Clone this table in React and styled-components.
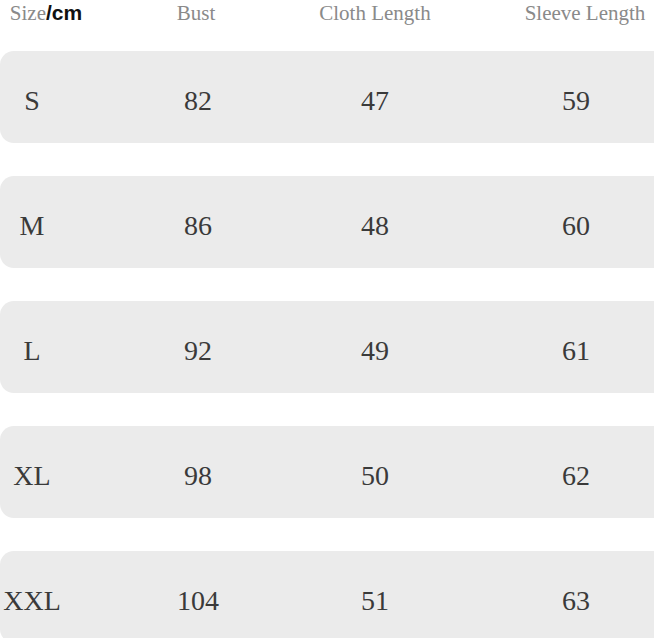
import React from 'react';
import styled, { createGlobalStyle } from 'styled-components';

const GlobalStyle = createGlobalStyle`
  html, body {
    margin: 0;
    padding: 0;
    background: #fff;
    overflow: hidden;
  }
`;

const Page = styled.div`
  width: 654px;
  height: 638px;
  overflow: hidden;
  display: flex;
  flex-direction: column;
  font-family: "Liberation Serif", "Times New Roman", serif;
`;

const Header = styled.div`
  display: grid;
  grid-template-columns: 92px 208px 150px 270px;
  flex-shrink: 0;
  height: 26px;
  align-items: center;
  margin-bottom: 25px;
  font-size: 21px;
  color: #8a8a8a;
`;

const Cell = styled.div`
  display: flex;
  justify-content: center;
  white-space: nowrap;
`;

const Unit = styled.span`
  font-family: "Liberation Sans", Arial, sans-serif;
  font-weight: bold;
  color: #111;
`;

const Rows = styled.div`
  display: flex;
  flex-direction: column;
  flex-shrink: 0;
  gap: 33px;
`;

const Row = styled.div`
  display: grid;
  grid-template-columns: 64px 268px 86px 316px;
  align-items: center;
  flex-shrink: 0;
  height: 92px;
  padding-top: 8px;
  box-sizing: border-box;
  background: #ebebeb;
  border-radius: 14px 0 0 14px;
  font-size: 28px;
  color: #3a3a3a;
`;

const data = [
  ['S', '82', '47', '59'],
  ['M', '86', '48', '60'],
  ['L', '92', '49', '61'],
  ['XL', '98', '50', '62'],
  ['XXL', '104', '51', '63'],
];

export default function App() {
  return (
    <>
      <GlobalStyle />
      <Page>
        <Header>
          <Cell>Size<Unit>/cm</Unit></Cell>
          <Cell>Bust</Cell>
          <Cell>Cloth Length</Cell>
          <Cell>Sleeve Length</Cell>
        </Header>
        <Rows>
          {data.map((row) => (
            <Row key={row[0]}>
              {row.map((v, i) => (
                <Cell key={i}>{v}</Cell>
              ))}
            </Row>
          ))}
        </Rows>
      </Page>
    </>
  );
}
